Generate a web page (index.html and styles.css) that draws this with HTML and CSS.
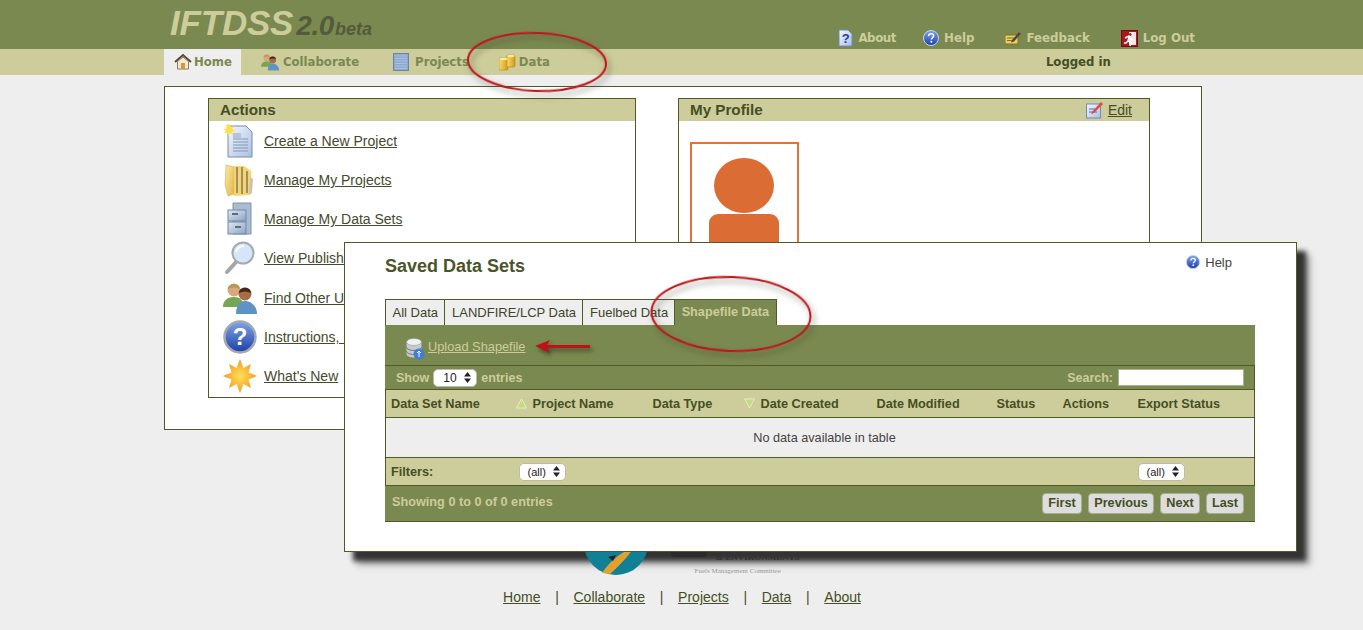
FILE: index.html
```html
<!DOCTYPE html>
<html lang="en">
<head>
<meta charset="utf-8">
<title>IFTDSS 2.0 beta</title>
<link rel="stylesheet" href="styles.css">
</head>
<body>
<svg class="defs" aria-hidden="true">
  <defs>
    <linearGradient id="gBlue" x1="0" y1="0" x2="0" y2="1"><stop offset="0" stop-color="#7fa4ea"/><stop offset="1" stop-color="#1c3fa8"/></linearGradient>
    <linearGradient id="gPage" x1="0" y1="0" x2="1" y2="1"><stop offset="0" stop-color="#f4f8ff"/><stop offset="1" stop-color="#a9c0e2"/></linearGradient>
    <linearGradient id="gGold" x1="0" y1="0" x2="1" y2="0"><stop offset="0" stop-color="#f7dc6a"/><stop offset="1" stop-color="#d69a17"/></linearGradient>
    <linearGradient id="gFolder" x1="0" y1="0" x2="1" y2="1"><stop offset="0" stop-color="#fbeaa0"/><stop offset="1" stop-color="#e0b84c"/></linearGradient>
    <linearGradient id="gSteel" x1="0" y1="0" x2="1" y2="1"><stop offset="0" stop-color="#dfe8f4"/><stop offset="1" stop-color="#8ea4c2"/></linearGradient>
    <radialGradient id="gStar" cx="0.5" cy="0.5" r="0.5"><stop offset="0" stop-color="#ffe15a"/><stop offset="1" stop-color="#f59a1c"/></radialGradient>
    <symbol id="help" viewBox="0 0 16 16">
      <circle cx="8" cy="8" r="7.5" fill="url(#gBlue)" stroke="#c5d2ea"/>
      <path d="M5.6 6.2C5.7 4.6 6.8 3.8 8.2 3.8c1.4 0 2.4.8 2.4 2 0 1.8-2.2 1.8-2.2 3.6" fill="none" stroke="#fff" stroke-width="1.5"/>
      <circle cx="8.3" cy="11.7" r="1" fill="#fff"/>
    </symbol>
    <symbol id="people" viewBox="0 0 34 34">
      <circle cx="11" cy="9" r="6.5" fill="#dba77c"/>
      <path d="M5 8C5 2 16 1 17 8 13 6 9 6 5 8z" fill="#b59a58"/>
      <path d="M0 26c0-7 5-10 11-10s9 3 10 10z" fill="#76a553"/>
      <circle cx="22" cy="13" r="6.5" fill="#a86d44"/>
      <path d="M16 12c0-7 12-7 12 0-4-2-8-2-12 0z" fill="#3c2a20"/>
      <path d="M13 33c0-9 4-13 9-13s12 4 12 13z" fill="#5e93c4"/>
    </symbol>
  </defs>
</svg>

<header class="top">
  <div class="logo"><span class="logo-name">IFTDSS</span><span class="logo-ver">2.0</span><span class="logo-beta">beta</span></div>
  <nav class="top-links">
    <a class="top-link top-about"><svg class="ic-tall" viewBox="0 0 15 18"><path d="M1 1h9l4 4v12H1z" fill="url(#gPage)" stroke="#6d8cc0"/><text x="7.500" y="14" class="ic-q">?</text></svg>About</a>
    <a class="top-link top-help"><svg class="ic16"><use href="#help"/></svg>Help</a>
    <a class="top-link top-feedback"><svg class="ic16" viewBox="0 0 16 16"><path d="M0 5h13v9H0z" fill="#e6cf63" stroke="#8a6f22"/><path d="M2 8h7M2 10.500h6" stroke="#8a6f22"/><path d="M7 10l7-8 2 1.500-7 8-3 1z" fill="#4b4b3a"/><path d="M14 2l1-1 1 1.500-1 1z" fill="#d65b5b"/></svg>Feedback</a>
    <a class="top-link top-logout"><svg class="ic-exit" viewBox="0 0 17 17"><rect x="0.500" y="0.500" width="16" height="16" fill="#a81a22" stroke="#6e0f14"/><rect x="8" y="2" width="7" height="13" fill="#f3e5e5"/><circle cx="9" cy="4.500" r="1.500" fill="#a81a22"/><path d="M4 8l4-2 2 3 2 1M8 7l-1 4 3 2-1 3M7 11l-2 2-2 0" fill="none" stroke="#fff" stroke-width="1.500"/></svg>Log Out</a>
  </nav>
</header>

<div class="subnav">
  <a class="tab tab-home"><svg class="ic18" viewBox="0 0 18 18"><path d="M1 9l8-7 8 7" fill="none" stroke="#5b4a3a" stroke-width="2"/><path d="M3.500 8.500L9 4l5.500 4.500V16h-11z" fill="#f1e9d5" stroke="#8b7b5f"/><rect x="7" y="10" width="4" height="6" fill="#d49a2f"/></svg>Home</a>
  <a class="tab tab-collab"><svg class="ic18"><use href="#people"/></svg>Collaborate</a>
  <a class="tab tab-projects"><svg class="ic-proj" viewBox="0 0 16 18"><rect x="0.500" y="0.500" width="15" height="17" fill="#8ea8cf" stroke="#6b84aa"/><path d="M2 3h12M2 5.500h12M2 8h12M2 10.500h12M2 13h12M2 15.500h12" stroke="#aac0e0"/></svg>Projects</a>
  <a class="tab tab-data"><svg class="ic-data" viewBox="0 0 17 17"><rect x="0" y="4" width="9" height="12" rx="1.500" fill="url(#gGold)" stroke="#a8790f" stroke-width="0.500"/><rect x="8" y="1" width="8" height="12" rx="1.500" fill="url(#gGold)" stroke="#a8790f" stroke-width="0.500"/><ellipse cx="4.500" cy="5" rx="4" ry="1.300" fill="#fbeb9e"/><ellipse cx="12" cy="2" rx="3.500" ry="1.200" fill="#fbeb9e"/></svg>Data</a>
  <span class="logged">Logged in</span>
</div>

<main class="card">
  <section class="panel panel-actions">
    <h2 class="panel-head">Actions</h2>
    <ul class="action-list">
      <li class="action"><svg class="ic34" viewBox="0 0 34 34"><path d="M5 2h18l6 6v25H5z" fill="url(#gPage)" stroke="#7a8ca8"/><path d="M10 15h15M10 18h15M10 21h15M10 24h15M10 27h15" stroke="#8496b2"/><rect x="10" y="9" width="8" height="5" fill="#b9c4d4"/><path d="M6 0l1.500 3.500L11 2 9 5l3.500 1.500L9 7.500 10.500 11 7 9l-2 3-.5-3.500L1 9l2-2.500L0 5l3.500-.5L3 1z" fill="#ffe04a"/></svg><a>Create a New Project</a></li>
      <li class="action"><svg class="ic34" viewBox="0 0 34 34"><path d="M3 2l8 2v27l-6 2L2 22z" fill="url(#gFolder)" stroke="#cda53f" stroke-width="0.500"/><path d="M11 3h10l7 5 1 18-2 6-16 1z" fill="#f2d675"/><path d="M14 4v26M19 4v27M24 8v22" stroke="#a58f5a" stroke-width="2"/><path d="M27 14l3 2-1 14-3 2z" fill="#c9c3ac"/></svg><a>Manage My Projects</a></li>
      <li class="action"><svg class="ic34" viewBox="0 0 34 34"><path d="M10 1h18v31H10z" fill="#a9bcd6" stroke="#7e92ad"/><rect x="5" y="8" width="18" height="11" fill="url(#gSteel)" stroke="#74879f"/><rect x="5" y="20" width="18" height="12" fill="url(#gSteel)" stroke="#74879f"/><path d="M9 12h6M12 25h6" stroke="#5c6c84" stroke-width="2"/></svg><a>Manage My Data Sets</a></li>
      <li class="action"><svg class="ic34" viewBox="0 0 34 34"><path d="M15 19L4 31" stroke="#a5a5a5" stroke-width="4" stroke-linecap="round"/><circle cx="20" cy="12" r="10.500" fill="#d6e6f8" stroke="#a3aab2" stroke-width="2"/><path d="M13 11c1-4 4-6 8-6" stroke="#fff" stroke-width="2" fill="none"/></svg><a>View Published Projects</a></li>
      <li class="action"><svg class="ic34"><use href="#people"/></svg><a>Find Other Users</a></li>
      <li class="action"><svg class="ic34" viewBox="0 0 34 34"><circle cx="17" cy="17" r="15.500" fill="url(#gBlue)" stroke="#a4a9b2" stroke-width="2.500"/><text x="17" y="25" class="ic-qbig">?</text></svg><a>Instructions, Help</a></li>
      <li class="action"><svg class="ic34" viewBox="0 0 34 34"><path d="M17 0l3.500 9L28 5l-2.500 8.500L34 17l-8.500 3.500L28 29l-7.500-4-3.500 9-3.500-9L6 29l2.500-8.500L0 17l8.500-3.500L6 5l7.500 4z" fill="url(#gStar)"/></svg><a>What's New</a></li>
    </ul>
  </section>
  <section class="panel panel-profile">
    <h2 class="panel-head panel-head-split">My Profile
      <span class="edit"><svg class="ic-edit" viewBox="0 0 17 18"><rect x="0.500" y="3" width="14" height="14" fill="url(#gPage)" stroke="#6d8cc0"/><path d="M3 8h6M3 11h8" stroke="#4c6fae"/><path d="M6 11L15 1l2 2-9 9-3 1z" fill="#e8483a"/></svg><a>Edit</a></span>
    </h2>
    <div class="avatar"><span class="avatar-head"></span><span class="avatar-body"></span></div>
  </section>
</main>

<footer class="foot">
  <div class="sponsors">
    <svg class="fire-logo" viewBox="0 0 64 64"><circle cx="32" cy="32" r="32" fill="#0f8096"/><path d="M18 62C26 50 36 42 50 36 44 46 36 54 26 63z" fill="#e2a02f"/><path d="M24 46l8-2-3 6z" fill="#222"/></svg>
    <div class="sponsor-text">
      <div class="sponsor-mark"></div>
      <div class="sponsor-env">&amp; ENVIRONMENTS</div>
      <div class="sponsor-sub">Fuels Management Committee</div>
    </div>
  </div>
  <nav class="foot-links">
    <a>Home</a><span>|</span><a>Collaborate</a><span>|</span><a>Projects</a><span>|</span><a>Data</a><span>|</span><a>About</a>
  </nav>
</footer>

<section class="modal">
  <div class="modal-top">
    <h1 class="modal-title">Saved Data Sets</h1>
    <span class="modal-help"><svg class="ic14"><use href="#help"/></svg>Help</span>
  </div>
  <div class="dtabs">
    <span class="dtab">All Data</span><span class="dtab">LANDFIRE/LCP Data</span><span class="dtab">Fuelbed Data</span><span class="dtab dtab-on">Shapefile Data</span>
  </div>
  <div class="tools">
    <svg class="ic-upload" viewBox="0 0 20 22"><ellipse cx="9" cy="4" rx="7.500" ry="3.500" fill="#eef0f2" stroke="#8b8f95" stroke-width="0.500"/><path d="M1.500 4v12c0 2 3.500 3.500 7.500 3.500s7.500-1.500 7.500-3.500V4c0 2-3.500 3.500-7.500 3.500S1.500 6 1.500 4z" fill="#c6cad0"/><path d="M1.500 9c0 2 3.500 3.500 7.500 3.500s7.500-1.500 7.500-3.500M1.500 13c0 2 3.500 3.500 7.500 3.500s7.500-1.500 7.500-3.500" fill="none" stroke="#6f747a"/><circle cx="14" cy="16" r="5.500" fill="#3e7fd6"/><path d="M14 19v-6M12 15l2-2 2 2" fill="none" stroke="#fff"/></svg>
    <a class="upload">Upload Shapefile</a>
  </div>
  <div class="len-bar">
    <span class="len">Show <span class="fake-select fake-len">10<svg class="updown" viewBox="0 0 7 11"><path d="M3.500 0L7 4.500H0zM3.500 11L0 6.500h7z"/></svg></span> entries</span>
    <span class="search">Search: <input class="search-box" type="text" aria-label="Search"></span>
  </div>
  <table class="grid">
    <thead>
      <tr>
        <th>Data Set Name</th>
        <th><svg class="sort" viewBox="0 0 12 11"><path d="M6 0.500L11.500 10.500H0.500z" fill="#c3dc84" stroke="#e8efc6"/></svg>Project Name</th>
        <th>Data Type</th>
        <th><svg class="sort" viewBox="0 0 12 11"><path d="M6 10.500L0.500 0.500H11.500z" fill="#c3dc84" stroke="#e8efc6"/></svg>Date Created</th>
        <th>Date Modified</th>
        <th>Status</th>
        <th>Actions</th>
        <th>Export Status</th>
      </tr>
    </thead>
    <tbody>
      <tr><td class="empty" colspan="8">No data available in table</td></tr>
    </tbody>
    <tfoot>
      <tr>
        <th>Filters:</th>
        <th><span class="fake-select fake-all">(all)<svg class="updown" viewBox="0 0 7 11"><path d="M3.500 0L7 4.500H0zM3.500 11L0 6.500h7z"/></svg></span></th>
        <th colspan="5"></th>
        <th><span class="fake-select fake-all">(all)<svg class="updown" viewBox="0 0 7 11"><path d="M3.500 0L7 4.500H0zM3.500 11L0 6.500h7z"/></svg></span></th>
      </tr>
    </tfoot>
  </table>
  <div class="pager">
    <span class="info">Showing 0 to 0 of 0 entries</span>
    <span class="pages"><a class="pg pg-first">First</a><a class="pg pg-prev">Previous</a><a class="pg pg-next">Next</a><a class="pg pg-last">Last</a></span>
  </div>
</section>

<svg class="mark mark-nav" viewBox="0 0 150 72"><ellipse cx="72" cy="31" rx="69" ry="29" class="ring ring-tilt"/></svg>
<svg class="mark mark-tab" viewBox="0 0 175 88"><ellipse cx="82" cy="39" rx="79.500" ry="37" class="ring ring-tilt"/></svg>
<svg class="mark mark-arrow" viewBox="0 0 68 18"><path d="M2 8l15-6-3 5h43v3H14l3 5z" class="arrow"/></svg>
</body>
</html>
```
FILE: styles.css
```css
* { box-sizing: border-box; }
html, body { margin: 0; padding: 0; }
body {
  position: relative;
  width: 1363px;
  height: 630px;
  overflow: hidden;
  background: #eeeeee;
  font-family: "Liberation Sans", Arial, sans-serif;
  font-size: 14px;
  color: #444a2c;
}
a { color: inherit; }
.defs { position: absolute; width: 0; height: 0; }

/* header */
.top {
  height: 49px;
  background: #7a8950;
  display: flex;
  padding-left: 170px;
}
.logo {
  display: flex;
  align-items: baseline;
  height: 36px;
  font-style: italic;
  font-weight: bold;
  line-height: 45px;
}
.logo-name { font-size: 35px; color: #cdcc9b; letter-spacing: -0.2px; }
.logo-ver { font-size: 28px; color: #545b3a; margin-left: 3px; letter-spacing: -0.4px; }
.logo-beta { font-size: 18px; color: #545b3a; margin-left: 1px; }
.top-links {
  margin-left: auto;
  display: flex;
  align-items: flex-start;
  padding: 29px 168px 0 0;
  font-family: "DejaVu Sans", Verdana, sans-serif;
  font-weight: bold;
  font-size: 11.800px;
  color: #cdcc9b;
}
.top-link { display: flex; align-items: center; height: 18px; }
.top-link svg { margin-right: 5px; }
.top-about { letter-spacing: -0.4px; }
.top-help { margin-left: 27px; }
.top-feedback { margin-left: 31px; }
.top-logout { margin-left: 31px; }
.ic-tall { width: 15px; height: 18px; flex: none; }
.ic16 { width: 16px; height: 16px; flex: none; }
.ic-exit { width: 17px; height: 17px; flex: none; }
.ic14 { width: 14px; height: 14px; flex: none; }
.ic18 { width: 18px; height: 18px; flex: none; }
.ic34 { width: 34px; height: 34px; flex: none; }
.ic-q { font: bold 13px "Liberation Sans", sans-serif; fill: #1c3fa8; text-anchor: middle; }
.ic-qbig { font: bold 24px "Liberation Sans", sans-serif; fill: #fff; text-anchor: middle; }

/* sub navigation */
.subnav {
  height: 26px;
  background: #cdcc9b;
  display: flex;
  align-items: stretch;
  padding-left: 164px;
  font-family: "DejaVu Sans", Verdana, sans-serif;
  font-weight: bold;
  font-size: 11.700px;
  color: #7a8950;
}
.tab { display: flex; align-items: center; }
.tab svg { margin-right: 4px; }
.tab-home { width: 77px; padding-left: 10px; background: #eeeeee; }
.tab-home svg { margin-right: 2px; }
.tab-collab { margin-left: 20px; }
.tab-projects { margin-left: 34px; }
.tab .ic-proj { width: 16px; height: 18px; margin-right: 6px; }
.tab-data { margin-left: 30px; }
.tab .ic-data { width: 17px; height: 17px; margin-right: 3px; }
.logged { margin-left: 496px; align-self: center; color: #444f24; }

/* main card */
.card {
  width: 1038px;
  height: 344px;
  margin: 11px 0 0 164px;
  padding: 11px 51px 0 43px;
  background: #fff;
  border: 1px solid #4f5a28;
  display: flex;
  gap: 42px;
}
.panel { border: 1px solid #4f5a28; height: 300px; background: #fff; }
.panel-actions { width: 428px; }
.panel-profile { width: 472px; }
.panel-head {
  margin: 0;
  height: 22px;
  padding-left: 11px;
  background: #cdcc9b;
  color: #444f24;
  font-size: 15.200px;
  font-weight: bold;
  line-height: 22px;
}
.panel-head-split { display: flex; justify-content: space-between; align-items: center; padding-right: 17px; }
.edit { display: flex; align-items: center; font-weight: normal; font-size: 14px; }
.ic-edit { width: 17px; height: 18px; margin-right: 5px; flex: none; }
.edit a { text-decoration: underline; }
.action-list { list-style: none; margin: 0; padding: 0 0 0 14px; }
.action { height: 39.250px; display: flex; align-items: center; gap: 7px; }
.action a { text-decoration: underline; }
.avatar {
  width: 109px;
  height: 140px;
  margin: 21px 0 0 11px;
  border: 2px solid #e27236;
}
.avatar-head {
  display: block;
  width: 60px;
  height: 55px;
  margin: 14px 0 0 22px;
  border-radius: 50%;
  background: #db6c33;
}
.avatar-body {
  display: block;
  width: 70px;
  height: 60px;
  margin: 1px 0 0 17px;
  border-radius: 9px 9px 0 0;
  background: #db6c33;
}

/* footer */
.foot { display: flex; flex-direction: column; align-items: center; padding-left: 1px; }
.sponsors {
  position: relative;
  z-index: 2;
  width: 223px;
  height: 23px;
  margin: 122px 0 0 26px;
  overflow: hidden;
  display: flex;
  align-items: flex-end;
}
.fire-logo { width: 64px; height: 64px; flex: none; }
.sponsor-text { position: relative; margin-left: 23px; height: 25px; width: 136px; font-family: "Liberation Serif", serif; }
.sponsor-mark { width: 36px; height: 7px; background: #2b2b2b; border-radius: 0 0 4px 4px; }
.sponsor-env { position: absolute; left: 45px; top: 2px; font-size: 9px; line-height: 11px; font-weight: bold; color: #333; white-space: nowrap; }
.sponsor-sub { position: absolute; left: 24px; top: 17px; font-size: 7px; color: #999; white-space: nowrap; }
.foot-links { margin-top: 14px; display: flex; gap: 14.700px; line-height: 16px; color: #444f24; }
.foot-links a { text-decoration: underline; }

/* modal */
.modal {
  position: absolute;
  z-index: 1;
  left: 344px;
  top: 242px;
  width: 953px;
  height: 310px;
  padding: 0 41px 0 40px;
  background: #fff;
  border: 1px solid #4f5a28;
  box-shadow: 9px 9px 5px #333, 13px 13px 7px #aaa;
}
.modal-top { height: 56px; display: flex; justify-content: space-between; }
.modal-title { margin: 13px 0 0; font-size: 18px; font-weight: bold; line-height: 20px; color: #4a5528; }
.modal-help { display: flex; align-items: center; gap: 5px; height: 16px; margin: 11px 23px 0 0; font-size: 13px; color: #444; }
.dtabs { display: flex; height: 26px; }
.dtab {
  padding: 0 5.500px 0 7.500px;
  line-height: 25px;
  font-size: 13px;
  color: #3f4428;
  background: #eeeeee;
  border: 1px solid #4f5a28;
  border-width: 1px 1px 0 0;
}
.dtab:first-child { border-left-width: 1px; padding: 0 5.500px 0 6.500px; }
.dtab-on { background: #7a8950; color: #cdcc9b; font-size: 12.700px; font-weight: bold; padding: 0 7px; }
.tools {
  height: 40px;
  background: #7a8950;
  display: flex;
  align-items: center;
  padding: 3px 0 0 20px;
  gap: 3px;
}
.ic-upload { width: 20px; height: 22px; margin-top: 4px; flex: none; }
.upload { font-size: 12.800px; color: #cdcc9b; text-decoration: underline; }
.len-bar {
  height: 24px;
  background: #7a8950;
  border-top: 1px solid #4f5a28;
  border-right: 1px solid #4f5a28;
  display: flex;
  justify-content: space-between;
  align-items: center;
  padding: 0 10px 0 11px;
  font-size: 12.500px;
  font-weight: bold;
  color: #cdcc9b;
}
.len, .search { display: flex; align-items: center; gap: 4px; }
.fake-select {
  display: inline-flex;
  align-items: center;
  justify-content: space-between;
  background: #fff;
  border: 1px solid #b9bda4;
  border-radius: 5px;
  font-size: 11px;
  font-weight: normal;
  color: #222;
}
.fake-len { width: 44px; height: 18px; padding: 0 5px 0 9px; font-size: 12px; }
.fake-all { width: 47px; height: 18px; padding: 0 5px 0 8px; }
.updown { width: 7px; height: 11px; fill: #222; }
.search-box { width: 126px; height: 17px; margin-left: 1px; padding: 0; border: 1px solid #a8b28c; background: #fff; }

.grid {
  width: 870px;
  border-collapse: collapse;
  table-layout: fixed;
  border: 1px solid #4f5a28;
  font-size: 12.700px;
}
.grid th { text-align: left; font-weight: bold; color: #444f24; padding: 0 0 0 5px; }
.grid thead th { height: 28px; background: #cdcc9b; border-bottom: 1px solid #4f5a28; }
.grid thead th:nth-child(1) { width: 124px; }
.grid thead th:nth-child(2) { width: 138px; }
.grid thead th:nth-child(3) { width: 90px; }
.grid thead th:nth-child(4) { width: 134px; }
.grid thead th:nth-child(5) { width: 120px; }
.grid thead th:nth-child(6) { width: 66px; }
.grid thead th:nth-child(7) { width: 75px; }
.sort { width: 11px; height: 11px; margin: 0 6px 0 1px; vertical-align: -1px; }
.empty { height: 40px; background: #eeeeee; text-align: center; padding-left: 10px; color: #444; font-size: 12.700px; }
.grid tfoot th { height: 28px; background: #cdcc9b; border-top: 1px solid #4f5a28; }
.grid tfoot th:nth-child(2) { padding-left: 9px; }
.pager {
  height: 36px;
  background: #7a8950;
  border-bottom: 1px solid #4f5a28;
  display: flex;
  justify-content: space-between;
  padding: 7px 11px 0 7px;
}
.info { font-size: 12.700px; font-weight: bold; color: #cdcc9b; line-height: 19px; }
.pages { display: flex; gap: 6px; }
.pg {
  display: block;
  height: 21px;
  line-height: 19px;
  text-align: center;
  background: #dddddd;
  border: 1px solid #a8ad94;
  border-radius: 4px;
  font-size: 12.700px;
  font-weight: bold;
  color: #444f24;
}
.pg-first { width: 40px; }
.pg-prev { width: 66px; }
.pg-next { width: 40px; }
.pg-last { width: 38px; }

/* hand-drawn annotations */
.mark { position: absolute; z-index: 3; overflow: visible; }
.mark-nav { left: 465px; top: 31px; width: 150px; height: 72px; }
.mark-tab { left: 649px; top: 275px; width: 175px; height: 88px; }
.mark-arrow { left: 533px; top: 338px; width: 68px; height: 18px; }
.ring { fill: none; stroke: #c0141c; stroke-width: 2; filter: drop-shadow(3px 4px 3px rgba(60, 60, 40, 0.6)); }
.ring-tilt { transform-box: fill-box; transform-origin: center; transform: rotate(2deg); }
.arrow { fill: #bf1218; filter: drop-shadow(2px 3px 2px rgba(30, 30, 20, 0.6)); }
```
